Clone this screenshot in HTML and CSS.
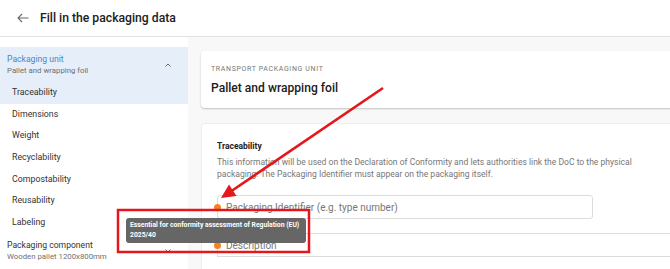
FILE: index.html
```html
<!DOCTYPE html>
<html lang="en">
<head>
	<meta charset="UTF-8">
	<title>Fill in the packaging data</title>
	<link rel="stylesheet" href="styles.css">
</head>
<body>
	<div class="topbar">
		<svg class="back" width="12" height="10" viewBox="0 0 12 10"><path d="M11.5 5H1M5 1L1 5l4 4" fill="none" stroke="#6b6b6b" stroke-width="1.1"/></svg>
		<h1>Fill in the packaging data</h1>
	</div>
	<div class="layout">
		<div class="sidebar">
			<div class="group open">
				<div>
					<div class="group-title">Packaging unit</div>
					<div class="group-sub">Pallet and wrapping foil</div>
				</div>
				<svg class="chev" width="6" height="4" viewBox="0 0 6 4"><path d="M0.5 3.5L3 1l2.5 2.5" fill="none" stroke="#666" stroke-width="1"/></svg>
			</div>
			<ul class="nav">
				<li class="active">Traceability</li>
				<li>Dimensions</li>
				<li>Weight</li>
				<li>Recyclability</li>
				<li>Compostability</li>
				<li>Reusability</li>
				<li>Labeling</li>
			</ul>
			<div class="group">
				<div>
					<div class="group-title">Packaging component</div>
					<div class="group-sub">Wooden pallet 1200x800mm</div>
				</div>
				<svg class="chev" width="6" height="4" viewBox="0 0 6 4"><path d="M0.5 0.5L3 3l2.5-2.5" fill="none" stroke="#666" stroke-width="1"/></svg>
			</div>
		</div>
		<div class="main">
			<div class="card head-card">
				<div class="eyebrow">TRANSPORT PACKAGING UNIT</div>
				<div class="card-title">Pallet and wrapping foil</div>
			</div>
			<div class="card form-card">
				<h3>Traceability</h3>
				<p>This information will be used on the Declaration of Conformity and lets authorities link the DoC to the physical packaging. The Packaging Identifier must appear on the packaging itself.</p>
				<div class="field">
					<span class="dot"></span>
					<span class="placeholder">Packaging Identifier (e.g. type number)</span>
				</div>
				<div class="field wide">
					<span class="dot"></span>
					<span class="placeholder">Description</span>
				</div>
			</div>
		</div>
	</div>

	<div class="tooltip">Essential for conformity assessment of Regulation (EU)<br>2025/40</div>

	<svg class="annot" width="670" height="269" viewBox="0 0 670 269">
		<line x1="383" y1="88" x2="230" y2="192" stroke="#e3171c" stroke-width="2.6"/>
		<polygon points="221,198 236.5,196 229,184.5" fill="#e3171c"/>
		<rect x="118" y="210" width="191" height="42" fill="none" stroke="#e3171c" stroke-width="2.5"/>
	</svg>
</body>
</html>
```

FILE: styles.css
```css
*{margin: 0;padding: 0;box-sizing: border-box;}
li{list-style: none;}
html,body{
	width: 670px;
	height: 269px;
	overflow: hidden;
}
body{
	font-family: Roboto, "Liberation Sans", sans-serif;
	color: #222;
	background: #fff;
	position: relative;
}
.topbar{
	height: 37px;
	border-bottom: 1px solid #e2e2e2;
	display: flex;
	align-items: center;
	padding-left: 17px;
}
.topbar .back{
	margin-right: 11px;
}
.topbar h1{
	font-size: 12.2px;
	font-weight: 500;
	color: #202020;
}
.layout{
	display: flex;
	height: 232px;
}
.sidebar{
	width: 188px;
	flex: none;
	background: #fff;
	padding-top: 10px;
}
.group{
	display: flex;
	align-items: center;
	justify-content: space-between;
	height: 35px;
	padding: 0 17px 0 7px;
}
.group.open{
	background: #e5eef9;
}
.group-title{
	font-size: 8.6px;
	line-height: 12px;
	color: #333;
}
.group.open .group-title{
	color: #4a86c9;
}
.group-sub{
	font-size: 7.8px;
	line-height: 12px;
	color: #6f6f6f;
}
.nav li{
	height: 21.7px;
	line-height: 21.7px;
	padding-left: 12px;
	font-size: 8.8px;
	color: #333;
}
.nav li.active{
	background: #e5eef9;
}
.main{
	flex: 1;
	background: #f8f8f8;
	padding: 14px 0 0 13px;
	overflow: hidden;
}
.card{
	background: #fff;
	border-radius: 4px;
	width: 520px;
}
.head-card{
	height: 57px;
	padding: 14px 10px 0;
	box-shadow: 0 1px 2px rgba(0,0,0,0.22);
	margin-bottom: 15px;
}
.eyebrow{
	font-size: 7px;
	letter-spacing: 0.65px;
	color: #777;
	line-height: 9px;
}
.card-title{
	font-size: 12.1px;
	font-weight: 500;
	color: #202020;
	margin-top: 7px;
}
.form-card{
	padding: 16px 0 0 15px;
	height: 160px;
	border: 1px solid #eee;
	border-right: none;
}
.form-card h3{
	font-size: 8.5px;
	font-weight: 700;
	color: #222;
	line-height: 12px;
}
.form-card p{
	font-size: 8.55px;
	line-height: 11.7px;
	color: #777;
	margin-top: 5px;
	width: 432px;
}
.field{
	position: relative;
	height: 24px;
	width: 376px;
	border: 1px solid #dcdcdc;
	border-radius: 3px;
	margin-top: 15px;
	display: flex;
	align-items: center;
	padding-left: 8px;
}
.field.wide{
	width: 480px;
	border-radius: 0;
	border-right: none;
	margin-top: 14px;
	height: 24px;
}
.dot{
	position: absolute;
	left: -4px;
	top: 8px;
	width: 7px;
	height: 7px;
	border-radius: 50%;
	background: #f2861e;
}
.placeholder{
	font-size: 10px;
	color: #777;
}
.tooltip{
	position: absolute;
	left: 126px;
	top: 218px;
	width: 180px;
	height: 25px;
	border-radius: 3px;
	background: rgba(90,90,90,0.93);
	color: #fff;
	font-size: 6.8px;
	font-weight: 700;
	line-height: 9.5px;
	padding: 3px 4px;
	white-space: nowrap;
}
.annot{
	position: absolute;
	top: 0;
	left: 0;
	pointer-events: none;
}
```
